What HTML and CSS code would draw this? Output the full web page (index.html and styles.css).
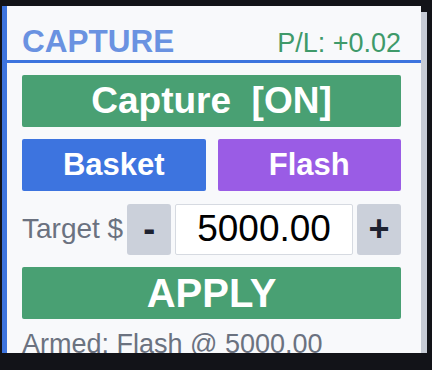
FILE: index.html
```html
<!DOCTYPE html>
<html lang="en">
<head>
    <meta charset="UTF-8">
    <meta name="viewport" content="width=device-width, initial-scale=1.0">
    <title>Capture</title>
    <link rel="stylesheet" href="styles.css">
</head>
<body>
    <div class="panel"> <!-- capture widget -->
        <div class="panel-head">
            <span class="title">CAPTURE</span>
            <span class="pl">P/L: +0.02</span>
        </div>

        <div class="panel-body">
            <button class="btn btn-green btn-toggle">Capture&nbsp;&nbsp;[ON]</button>

            <div class="mode-row">
                <button class="btn btn-blue">Basket</button>
                <button class="btn btn-purple">Flash</button>
            </div>

            <div class="target-row">
                <span class="target-label">Target $</span>
                <button class="step">-</button>
                <input class="target-input" type="text" value="5000.00">
                <button class="step">+</button>
            </div>

            <button class="btn btn-green btn-apply">APPLY</button>

            <div class="status">Armed: Flash @ 5000.00</div>
        </div>
    </div>
</body>
</html>
```

FILE: styles.css
```css
body {
    margin: 0;
    background-color: #121318;
    font-family: "Liberation Sans", Arial, sans-serif;
}
.panel {
    margin: 6px 0 0 2px;
    width: 414px;
    height: 347px;
    overflow: hidden;
    background-color: #f8f9fb;
    border-left: 5px solid #3d74df;
    box-shadow: 6px 6px 0 #c6cbd5;
}
.panel-head {
    display: flex;
    justify-content: space-between;
    align-items: baseline;
    padding: 19px 20px 1px 15px;
    line-height: 32px;
    border-bottom: 3px solid #3d74df;
}
.title {
    font-size: 31.5px;
    font-weight: bold;
    color: #6a92e1;
}
.pl {
    font-size: 27px;
    color: #3f9a6a;
}
.panel-body {
    display: flex;
    flex-direction: column;
    gap: 12px;
    padding: 12px 20px 0 15px;
}
.btn {
    height: 52px;
    border: none;
    border-radius: 2px;
    color: white;
    font-family: inherit;
    font-weight: bold;
    padding: 0;
}
.btn-green {
    background-color: #49a073;
}
.btn-blue {
    background-color: #3d74df;
}
.btn-purple {
    background-color: #9a5ce5;
}
.btn-toggle {
    font-size: 37px;
}
.btn-apply {
    font-size: 40px;
}
.mode-row {
    display: grid;
    grid-template-columns: 1fr 1fr;
    gap: 12px;
}
.mode-row .btn {
    font-size: 31px;
}
.target-row {
    display: flex;
    align-items: center;
    gap: 4px;
    height: 52px;
}
.target-label {
    font-size: 28px;
    color: #6b7280;
}
.step {
    width: 44px;
    height: 51px;
    border: none;
    border-radius: 3px;
    background-color: #cbd0da;
    color: #1e2230;
    font-family: inherit;
    font-size: 36px;
    font-weight: bold;
    padding: 0;
}
.target-input {
    flex: 1;
    min-width: 0;
    height: 51px;
    box-sizing: border-box;
    border: 1px solid #d6dae1;
    border-radius: 2px;
    background-color: white;
    font-family: inherit;
    font-size: 37px;
    text-align: center;
    color: black;
    padding: 0;
}
.status {
    font-size: 27px;
    line-height: 26px;
    color: #6b7280;
}
```
